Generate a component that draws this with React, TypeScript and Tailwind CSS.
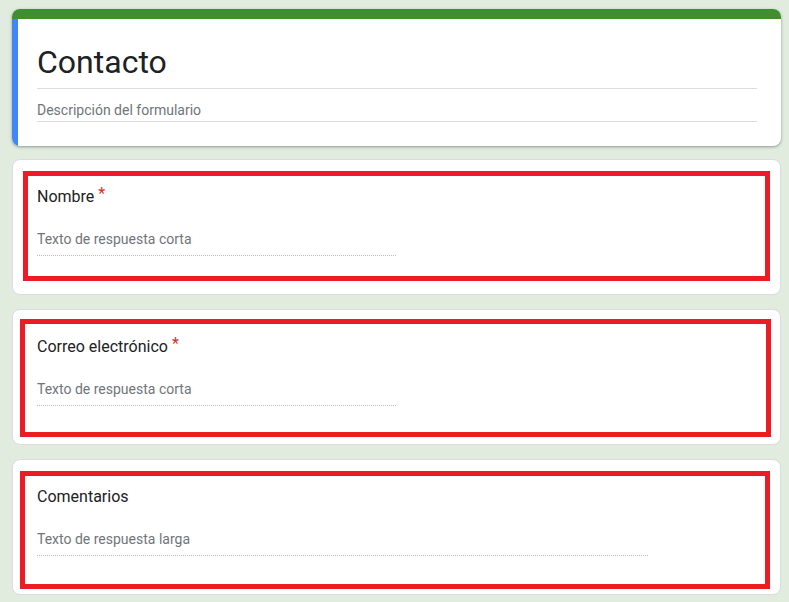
import React from "react";

type Pregunta = {
  titulo: string;
  requerida: boolean;
  placeholder: string;
  ancho: string;
  marco: string;
};

const preguntas: Pregunta[] = [
  {
    titulo: "Nombre",
    requerida: true,
    placeholder: "Texto de respuesta corta",
    ancho: "w-[359px]",
    marco: "left-[10px] top-[11px] right-[10px] bottom-[13px]",
  },
  {
    titulo: "Correo electrónico",
    requerida: true,
    placeholder: "Texto de respuesta corta",
    ancho: "w-[359px]",
    marco: "left-[7px] top-[9px] right-[9px] bottom-[7px]",
  },
  {
    titulo: "Comentarios",
    requerida: false,
    placeholder: "Texto de respuesta larga",
    ancho: "w-[611px]",
    marco: "left-[7px] top-[11px] right-[10px] bottom-[5px]",
  },
];

function Tarjeta({ p }: { p: Pregunta }) {
  return (
    <div className="relative bg-white border border-[#dadce0] rounded-lg pt-[25px] pb-[38px] px-6">
      <div className="text-[16px] leading-6 text-[#202124]">
        {p.titulo}
        {p.requerida && <span className="text-[#d93025] ml-1 relative -top-[3px]">*</span>}
      </div>
      <div
        className={`mt-5 ${p.ancho} pb-[6px] border-b border-dotted border-[#bdbdbd] text-[14px] leading-5 text-[#70757a]`}
      >
        {p.placeholder}
      </div>
      {/* marco rojo de anotación */}
      <div className={`absolute ${p.marco} border-[5px] border-[#ed1c24] pointer-events-none`} />
    </div>
  );
}

export default function App() {
  return (
    <main
      className="min-h-screen bg-[#e1ecdf] pt-[9px] px-3 pb-6"
      style={{ fontFamily: "Roboto, 'Noto Sans', Arial, sans-serif" }}
    >
      <div className="w-[769px] flex flex-col gap-[13px]">
        <div className="rounded-lg overflow-hidden bg-white shadow-[0_1px_2px_rgba(60,64,67,0.3),0_1px_3px_1px_rgba(60,64,67,0.15)]">
          <div className="h-[10px] bg-[#3f8e2f]" />
          <div className="border-l-[6px] border-[#4285f4] pl-[19px] pr-6 pt-[23px] pb-6">
            <h1 className="text-[32px] leading-10 text-[#202124] pb-[6px] border-b border-[#dadce0]">
              Contacto
            </h1>
            <p className="mt-[11px] text-[14px] leading-5 text-[#70757a] pb-[1px] border-b border-[#dadce0]">
              Descripción del formulario
            </p>
          </div>
        </div>
        <div className="flex flex-col gap-[14px]">
          {preguntas.map((p) => (
            <Tarjeta key={p.titulo} p={p} />
          ))}
        </div>
      </div>
    </main>
  );
}
